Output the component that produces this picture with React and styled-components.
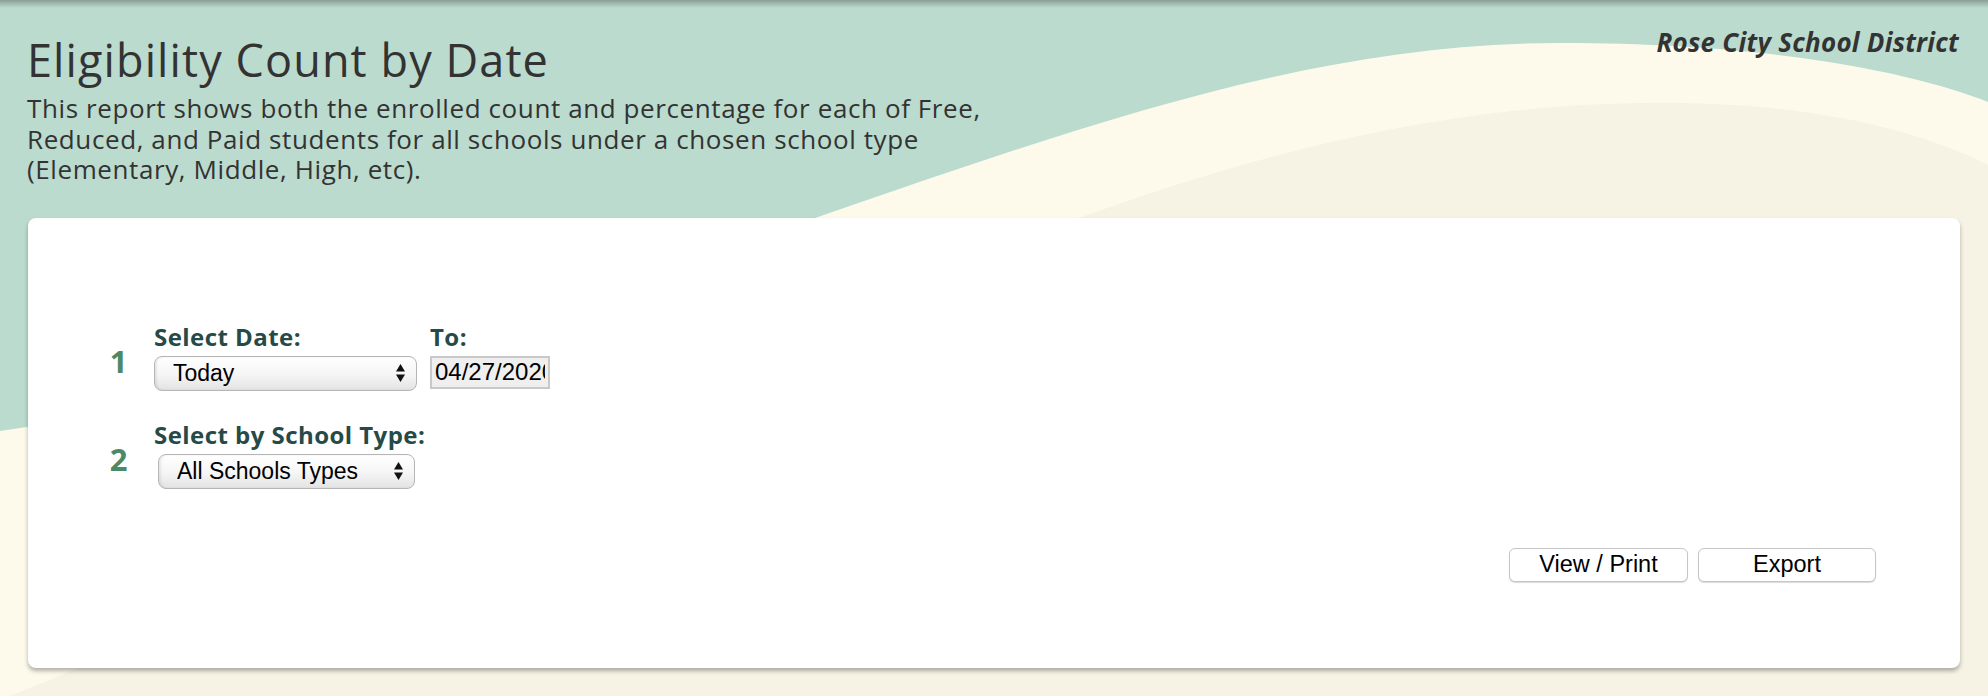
import React from "react";
import styled, { createGlobalStyle } from "styled-components";

const GlobalStyle = createGlobalStyle`
  html, body { margin: 0; padding: 0; }
  body { background: #bbdbcf; }
`;

const Page = styled.div`
  position: relative;
  width: 1988px;
  height: 696px;
  overflow: hidden;
  background: #bbdbcf;
  font-family: "Open Sans", Lato, sans-serif;
  &::after {
    content: "";
    position: absolute;
    left: 0;
    right: 0;
    top: 0;
    height: 8px;
    background: linear-gradient(rgba(0, 0, 0, 0.27), rgba(0, 0, 0, 0));
    pointer-events: none;
  }
`;

const Backdrop = styled.svg`
  position: absolute;
  inset: 0;
  width: 1988px;
  height: 696px;
  z-index: 0;
`;

const Content = styled.div`
  position: relative;
  z-index: 1;
`;

const Header = styled.header`
  display: flex;
  justify-content: space-between;
  align-items: flex-start;
  padding: 27px 29px 0 27px;
`;

const TitleBlock = styled.div`
  display: flex;
  flex-direction: column;
`;

const Title = styled.h1`
  margin: 7px 0 0;
  font-size: 45px;
  line-height: 52px;
  font-weight: 400;
  letter-spacing: 1.1px;
  color: #333;
`;

const Description = styled.p`
  margin: 7px 0 0;
  font-size: 26px;
  line-height: 30.5px;
  letter-spacing: 0.6px;
  color: #333;
  white-space: nowrap;
`;

const District = styled.div`
  font-size: 26px;
  line-height: 30px;
  font-weight: 700;
  font-style: italic;
  letter-spacing: 0.25px;
  color: #333;
`;

const Card = styled.section`
  margin: 33px 28px 0;
  height: 450px;
  box-sizing: border-box;
  background: #fff;
  border-radius: 8px;
  box-shadow: 0 3px 4px rgba(0, 0, 0, 0.3);
  padding: 105px 84px 0 70px;
  display: flex;
  flex-direction: column;
`;

const StepRow = styled.div`
  display: flex;
  align-items: flex-start;
  gap: 15px;
  & + & {
    margin-top: 30px;
  }
`;

const StepNumber = styled.div`
  width: 41px;
  text-align: center;
  font-size: 31px;
  line-height: 36px;
  font-weight: 700;
  color: #4a8a68;
  margin-top: 20px;
`;

const Fields = styled.div`
  display: flex;
  gap: 13px;
`;

const Field = styled.div`
  display: flex;
  flex-direction: column;
  gap: 6px;
`;

const Label = styled.label`
  font-size: 24px;
  line-height: 27px;
  font-weight: 700;
  letter-spacing: 0.45px;
  color: #264a48;
`;

const SelectWrap = styled.div`
  position: relative;
  width: ${(p) => p.$w}px;
  margin-left: ${(p) => p.$indent || 0}px;
`;

const Select = styled.select`
  appearance: none;
  -webkit-appearance: none;
  display: block;
  width: 100%;
  height: 35px;
  box-sizing: border-box;
  border: 1px solid #b5b5b5;
  border-radius: 8px;
  background: linear-gradient(#ffffff, #f5f5f5 55%, #e3e3e3);
  box-shadow: inset 2px 0 2px rgba(0, 0, 0, 0.08);
  padding: 0 30px 0 18px;
  font-family: "Liberation Sans", Arial, sans-serif;
  font-size: 23px;
  color: #000;
  outline: none;
`;

const Arrows = styled.svg`
  position: absolute;
  right: 12px;
  top: 50%;
  transform: translateY(-50%);
  pointer-events: none;
`;

const DateInput = styled.input`
  width: 120px;
  height: 33px;
  box-sizing: border-box;
  border: 2px solid #c9c9c9;
  background: #efefef;
  padding: 0 3px;
  font-family: "Liberation Sans", Arial, sans-serif;
  font-size: 24px;
  color: #000;
  outline: none;
`;

const Actions = styled.div`
  display: flex;
  justify-content: flex-end;
  gap: 10px;
  margin-top: 59px;
`;

const Button = styled.button`
  width: ${(p) => p.$w}px;
  height: 34px;
  box-sizing: border-box;
  border: 1px solid #c6c6c6;
  border-radius: 6px;
  background: #fff;
  box-shadow: 0 1px 1px rgba(0, 0, 0, 0.15);
  font-family: "Liberation Sans", Arial, sans-serif;
  font-size: 23.5px;
  color: #000;
  padding: 0;
`;

const SelectArrows = () => (
  <Arrows width="9" height="18" viewBox="0 0 9 18">
    <path d="M0 7.5 L4.5 0 L9 7.5 Z" fill="#111" />
    <path d="M0 10.5 L4.5 18 L9 10.5 Z" fill="#111" />
  </Arrows>
);

const Dropdown = ({ width, indent, options }) => (
  <SelectWrap $w={width} $indent={indent}>
    <Select defaultValue={options[0]}>
      {options.map((o) => (
        <option key={o}>{o}</option>
      ))}
    </Select>
    <SelectArrows />
  </SelectWrap>
);

export default function App() {
  return (
    <>
      <GlobalStyle />
      <Page>
        <Backdrop viewBox="0 0 1988 696" preserveAspectRatio="none">
          <path
            d="M0 431 C700 330 1100 43 1560 43 C1780 43 1920 75 1988 102 L1988 696 L0 696 Z"
            fill="#fefaeb"
          />
          <path
            d="M0 700 C600 460 1100 110 1640 103 C1820 100 1930 135 1988 165 L1988 696 L0 696 Z"
            fill="#f6f3e5"
          />
        </Backdrop>
        <Content>
          <Header>
            <TitleBlock>
              <Title>Eligibility Count by Date</Title>
              <Description>
                This report shows both the enrolled count and percentage for each of Free,
                <br />
                Reduced, and Paid students for all schools under a chosen school type
                <br />
                (Elementary, Middle, High, etc).
              </Description>
            </TitleBlock>
            <District>Rose City School District</District>
          </Header>
          <Card>
            <StepRow>
              <StepNumber>1</StepNumber>
              <Fields>
                <Field>
                  <Label>Select Date:</Label>
                  <Dropdown width={263} options={["Today", "Yesterday", "Date Range"]} />
                </Field>
                <Field>
                  <Label>To:</Label>
                  <DateInput defaultValue="04/27/2020" readOnly />
                </Field>
              </Fields>
            </StepRow>
            <StepRow>
              <StepNumber>2</StepNumber>
              <Fields>
                <Field>
                  <Label>Select by School Type:</Label>
                  <Dropdown
                    width={257}
                    indent={4}
                    options={["All Schools Types", "Elementary", "Middle", "High"]}
                  />
                </Field>
              </Fields>
            </StepRow>
            <Actions>
              <Button $w={179}>View / Print</Button>
              <Button $w={178}>Export</Button>
            </Actions>
          </Card>
        </Content>
      </Page>
    </>
  );
}
